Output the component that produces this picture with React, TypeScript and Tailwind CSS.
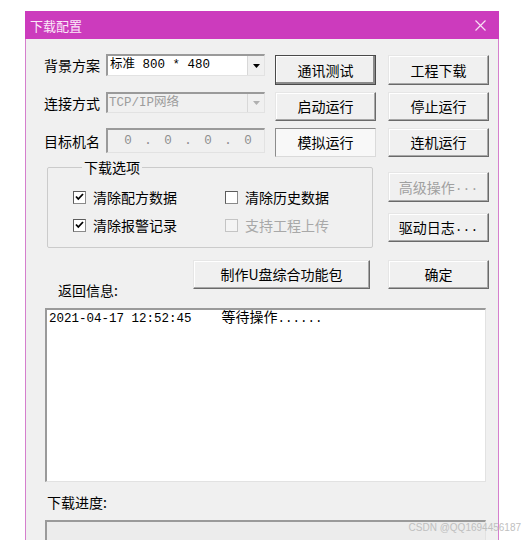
import React from "react";

const FONT = "[font-family:'Noto_Sans_CJK_SC','Noto_Sans',sans-serif]";
const MONO = "[font-family:'Liberation_Mono','Noto_Sans_CJK_SC',monospace]";

type BtnProps = {
  children: React.ReactNode;
  variant?: "normal" | "default" | "flat";
  disabled?: boolean;
  className?: string;
};

function Btn({ children, variant = "normal", disabled, className = "" }: BtnProps) {
  const look =
    variant === "default"
      ? "border border-[#4a4a4a] bg-[#f0f0f0] shadow-[inset_-2px_-2px_0_#8a8a8a,inset_1px_1px_0_#ffffff]"
      : variant === "flat"
        ? "border border-t-[#8c8c8c] border-l-[#8c8c8c] border-r-[#dadada] border-b-[#dadada] bg-[#f8f8f8]"
        : "border border-t-[#e6e6e6] border-l-[#e6e6e6] border-r-[#6a6a6a] border-b-[#6a6a6a] bg-[#f0f0f0] shadow-[inset_-1px_-1px_0_#a8a8a8,inset_1px_1px_0_#ffffff]";
  return (
    <div
      className={`flex w-[101px] items-center justify-center text-[14px] ${look} ${
        disabled ? "text-[#a0a0a0]" : "text-black"
      } ${className}`}
    >
      {children}
    </div>
  );
}

function Arrow({ disabled }: { disabled?: boolean }) {
  return (
    <div className="flex h-full w-[17px] items-center justify-center border-l border-[#d8d8d8] bg-[#f0f0f0]">
      <svg width="7" height="4" viewBox="0 0 7 4">
        <path d="M0 0 L7 0 L3.5 4 Z" fill={disabled ? "#b0b0b0" : "#000"} />
      </svg>
    </div>
  );
}

function Check({ checked, disabled }: { checked?: boolean; disabled?: boolean }) {
  return (
    <div
      className={`flex h-[13px] w-[13px] items-center justify-center border ${
        disabled
          ? "border-[#c4c4c4] bg-[#f4f4f4]"
          : "border-t-[#5c5c5c] border-l-[#5c5c5c] border-r-[#8a8a8a] border-b-[#8a8a8a] bg-white"
      }`}
    >
      {checked && (
        <svg width="9" height="8" viewBox="0 0 9 8">
          <path d="M1 3.5 L3.3 6 L8 1" fill="none" stroke="#000" strokeWidth="1.8" />
        </svg>
      )}
    </div>
  );
}

const sunken =
  "border-t-2 border-l-2 border-r border-b border-t-[#9a9a9a] border-l-[#9a9a9a] border-r-[#e2e2e2] border-b-[#e2e2e2]";

export default function App() {
  return (
    <div className={`relative h-[540px] w-[525px] overflow-hidden bg-white text-[14px] text-black ${FONT}`}>
      <div className="ml-[25px] mt-[11px] w-[474px]">
        {/* title bar */}
        <div className="flex h-[28px] items-center justify-between bg-[#cc3bbd] pl-[5px] pr-[13px]">
          <span className="text-[13px] leading-none text-[#fbe9f8]">下载配置</span>
          <svg width="11" height="11" viewBox="0 0 11 11">
            <path d="M0.5 0.5 L10.5 10.5 M10.5 0.5 L0.5 10.5" stroke="#f8e0f4" strokeWidth="1.2" />
          </svg>
        </div>

        <div className="h-[501px] overflow-hidden border-x border-[#d57fcd] bg-[#f0f0f0]">
          <div className="flex items-start pl-[18px] pt-[15px]">
            {/* left part */}
            <div className="w-[332px]">
              <div className="flex items-start">
                <div className="flex h-[22px] items-center">
                  <span className="w-[56px] leading-none">背景方案</span>
                  <div className={`ml-[6px] flex h-[22px] w-[159px] items-center bg-white ${sunken}`}>
                    <span className={`flex-1 whitespace-pre pl-[2px] text-[12.5px] ${MONO}`}>标准 800 * 480</span>
                    <Arrow />
                  </div>
                </div>
                <Btn variant="default" className="ml-[10px] mt-[1px] h-[30px]">通讯测试</Btn>
              </div>

              <div className="mt-[7px] flex items-start">
                <div className="flex h-[21px] items-center">
                  <span className="w-[56px] leading-none">连接方式</span>
                  <div className={`ml-[6px] flex h-[21px] w-[159px] items-center bg-[#f0f0f0] ${sunken}`}>
                    <span className={`flex-1 whitespace-pre pl-[1px] text-[12.5px] text-[#9c9c9c] ${MONO}`}>TCP/IP网络</span>
                    <Arrow disabled />
                  </div>
                </div>
                <Btn className="ml-[10px] h-[29px]">启动运行</Btn>
              </div>

              <div className="mt-[7px] flex items-start">
                <div className="flex h-[25px] items-center">
                  <span className="w-[56px] leading-none">目标机名</span>
                  <div
                    className={`ml-[6px] flex h-[25px] w-[159px] items-center bg-[#f0f0f0] pl-[14px] text-[12.5px] text-[#8e8e8e] ${sunken} ${MONO}`}
                  >
                    {["0", "0", "0", "0"].map((d, i) => (
                      <React.Fragment key={i}>
                        <span className="w-[12px] text-center">{d}</span>
                        {i < 3 && <span className="w-[28px] text-center">.</span>}
                      </React.Fragment>
                    ))}
                  </div>
                </div>
                <Btn variant="flat" className="ml-[10px] h-[29px]">模拟运行</Btn>
              </div>

              <fieldset className="ml-[3px] w-[326px] rounded-[2px] border border-[#cbcbcb] pb-[8px] pl-[25px] pt-[6px]">
                <legend className="ml-[9px] px-[2px] leading-[20px]">下载选项</legend>
                <div className="flex h-[28px] items-center">
                  <div className="flex w-[152px] items-center">
                    <Check checked />
                    <span className="ml-[7px]">清除配方数据</span>
                  </div>
                  <div className="flex items-center">
                    <Check />
                    <span className="ml-[7px]">清除历史数据</span>
                  </div>
                </div>
                <div className="flex h-[28px] items-center">
                  <div className="flex w-[152px] items-center">
                    <Check checked />
                    <span className="ml-[7px]">清除报警记录</span>
                  </div>
                  <div className="flex items-center">
                    <Check disabled />
                    <span className="ml-[7px] text-[#a8a8a8]">支持工程上传</span>
                  </div>
                </div>
              </fieldset>

              <div className="mt-[12px] flex h-[48px] items-start">
                <div className="w-[149px] pl-[14px] pt-[20px] leading-[20px]">返回信息:</div>
                <Btn className="h-[29px] w-[177px]">制作U盘综合功能包</Btn>
              </div>
            </div>

            {/* right column */}
            <div className="ml-[12px] flex w-[101px] flex-col">
              <Btn className="mt-[1px] h-[30px]">工程下载</Btn>
              <Btn className="mt-[7px] h-[29px]">停止运行</Btn>
              <Btn className="mt-[7px] h-[29px]">连机运行</Btn>
              <Btn disabled className="mt-[15px] h-[30px]">
                高级操作<span className={`text-[13px] ${MONO}`}>...</span>
              </Btn>
              <Btn className="mt-[11px] h-[29px]">
                驱动日志<span className={`text-[13px] ${MONO}`}>...</span>
              </Btn>
              <Btn className="mt-[18px] h-[29px]">确定</Btn>
            </div>
          </div>

          {/* message box */}
          <div className={`ml-[19px] h-[174px] w-[441px] bg-white pl-[2px] pt-[1px] ${sunken}`}>
            <div className={`whitespace-pre text-[12.5px] leading-[15px] ${MONO}`}>
              2021-04-17 12:52:45    <span className="text-[14px]">等待操作</span>......
            </div>
          </div>

          <div className="ml-[21px] mt-[10px] leading-[20px]">下载进度:</div>
          <div className={`ml-[19px] mt-[8px] h-[24px] w-[441px] bg-[#ececec] ${sunken}`} />
        </div>
      </div>

      <div className="absolute right-[4px] top-[521px] whitespace-nowrap text-[10px] leading-[14px] text-[#c0c0c0] [font-family:'Liberation_Sans',sans-serif]">
        CSDN @QQ1694456187
      </div>
    </div>
  );
}
